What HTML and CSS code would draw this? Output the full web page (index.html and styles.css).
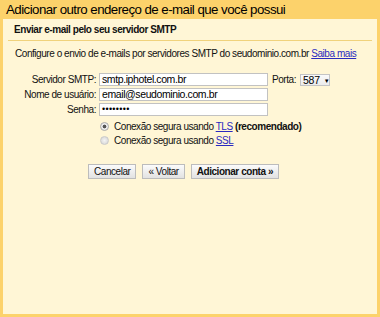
FILE: index.html
```html
<!DOCTYPE html>
<html lang="pt-BR">
<head>
<meta charset="utf-8">
<link rel="stylesheet" href="styles.css">
</head>
<body>
<div class="frame">
  <div class="title">Adicionar outro endereço de e-mail que você possui</div>
  <div class="panel">
    <div class="subhead">Enviar e-mail pelo seu servidor SMTP</div>
    <p class="intro">Configure o envio de e-mails por servidores SMTP do seudominio.com.br <a href="#">Saiba mais</a></p>
    <div class="form">
      <div class="row">
        <label class="lbl">Servidor SMTP:</label>
        <div class="input">smtp.iphotel.com.br</div>
        <span class="porta">Porta:</span>
        <div class="select">587 <span class="arrow">▼</span></div>
      </div>
      <div class="row">
        <label class="lbl">Nome de usuário:</label>
        <div class="input">email@seudominio.com.br</div>
      </div>
      <div class="row">
        <label class="lbl">Senha:</label>
        <div class="input pw">••••••••</div>
      </div>
    </div>
    <div class="radios">
      <div class="radio-row"><span class="radio checked"></span><span>Conexão segura usando <a href="#">TLS</a> <b>(recomendado)</b></span></div>
      <div class="radio-row"><span class="radio"></span><span>Conexão segura usando <a href="#">SSL</a></span></div>
    </div>
    <div class="buttons">
      <span class="btn">Cancelar</span>
      <span class="btn">« Voltar</span>
      <span class="btn bold">Adicionar conta »</span>
    </div>
  </div>
</div>
</body>
</html>
```
FILE: styles.css
```css
html, body { margin: 0; padding: 0; }
body { width: 380px; height: 317px; font-family: "Liberation Sans", Arial, sans-serif; font-size: 10px; letter-spacing: -0.45px; color: #111; }
.frame { box-sizing: border-box; width: 380px; height: 317px; background: #fcd26b; padding: 0 3px 3px 3px; display: flex; flex-direction: column; }
.title { height: 19px; line-height: 20px; font-size: 13.3px; letter-spacing: -0.55px; color: #000; padding-left: 3px; white-space: nowrap; }
.panel { flex: 1; background: #fff6d6; padding: 0 5px; }
.subhead { font-weight: bold; line-height: 21px; padding: 0 6px; border-bottom: 1px solid #f0d27c; }
.intro { margin: 6px 0 0 7px; line-height: 13px; white-space: nowrap; }
a { color: #2a2ac0; text-decoration: underline; }
.form { margin-top: 13px; display: flex; flex-direction: column; gap: 2px; }
.row { display: flex; align-items: center; height: 13px; }
.lbl { width: 88px; text-align: right; margin-right: 3px; white-space: nowrap; }
.input { box-sizing: border-box; width: 169px; height: 13px; background: #fff; border: 1px solid #c2c2c2; font-size: 10.5px; letter-spacing: -0.4px; line-height: 11px; padding-left: 2px; color: #000; white-space: nowrap; overflow: hidden; }
.pw { font-size: 9px; letter-spacing: 0.3px; line-height: 11px; }
.porta { margin-left: 4px; }
.select { box-sizing: border-box; margin-left: 4px; height: 12px; width: 30px; border: 1px solid #c4c4c4; background: linear-gradient(#fafafa, #ececec); font-size: 10.5px; letter-spacing: -0.2px; line-height: 10px; padding-left: 2px; white-space: nowrap; color: #000; }
.arrow { font-size: 6px; vertical-align: 1px; margin-left: 1px; }
.radios { margin: 3px 0 0 92px; }
.radio-row { display: flex; align-items: center; height: 14px; white-space: nowrap; }
.radio { width: 9px; height: 9px; border-radius: 50%; background: radial-gradient(circle, #f4f4f4, #d2d2d2); border: 1px solid #cacaca; box-sizing: border-box; margin-right: 5px; flex: none; }
.radio.checked { background: radial-gradient(circle, #555 0 1.6px, #ececec 2.2px); border-color: #aaa; }
.buttons { display: flex; gap: 6px; margin: 17px 0 0 80px; }
.btn { box-sizing: border-box; border: 1px solid #bcbcbc; background: linear-gradient(#fbfbfb, #e2e2e2); padding: 0 5px; height: 15px; line-height: 13px; color: #111; white-space: nowrap; }
.bold { font-weight: bold; }
```
